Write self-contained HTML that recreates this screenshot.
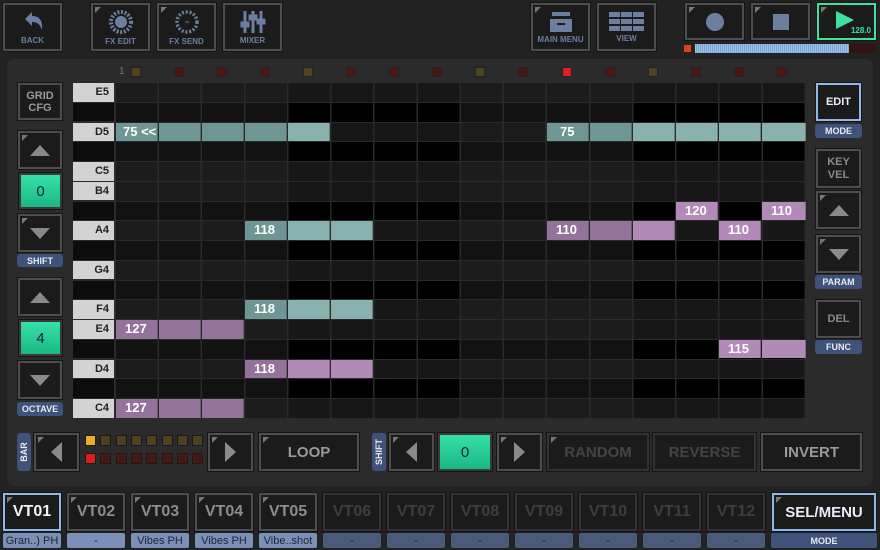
<!DOCTYPE html>
<html><head><meta charset="utf-8"><style>
*{margin:0;padding:0;box-sizing:border-box}
body{width:880px;height:550px;background:#222222;position:relative;overflow:hidden;font-family:"Liberation Sans",sans-serif;font-weight:bold}
.a{position:absolute}
.btn{position:absolute;background:#1b1b1b;border:2px solid #4e4e4e;box-shadow:0 0 0 1px #151515;display:flex;align-items:center;justify-content:center;color:#9a9a9a}
.btn.c::before{content:"";position:absolute;left:2px;top:2px;border-top:6px solid #777;border-right:6px solid transparent}
.tb{flex-direction:column;color:#6c7fa0;font-size:8px}
.tb span{margin-top:2px}
.lbl{position:absolute;background:#3f527a;color:#e6ecf6;font-size:9px;display:flex;align-items:center;justify-content:center;border-radius:3px}
.grn{position:absolute;background:linear-gradient(#35e0a8,#1bb884);border:2px solid #3a3a3a;box-shadow:0 0 0 1px #151515;display:flex;align-items:center;justify-content:center;color:#123;font-size:15px;font-weight:normal}
.key{position:absolute;left:73px;width:41px;height:18.5px;font-size:11px;color:#222;text-align:right;padding-right:5px;line-height:18.5px}
.wk{background:#d3d3d3}
.bk{background:#0c0c0c}
.row{position:absolute;left:116px;width:690px;height:19.75px;border-bottom:1px solid #2a2a2a}
.rw{background:repeating-linear-gradient(to right,transparent 0 41.6px,#2a2a2a 41.6px 43.125px),linear-gradient(to right,#1c1c1c 0 25%,#171717 25% 50%,#1c1c1c 50% 75%,#171717 75%)}
.rb{background:repeating-linear-gradient(to right,transparent 0 41.6px,#2a2a2a 41.6px 43.125px),linear-gradient(to right,#121212 0 25%,#000 25% 50%,#121212 50% 75%,#000 75%)}
.n{position:absolute;height:18.5px;width:42px;color:#fff;font-size:13px;line-height:18.5px;padding-left:7px;border-right:1px solid rgba(0,0,0,.25)}
.t1{background:#6e9694}.t2{background:#89b2af}.p1{background:#94739b}.p2{background:#b28ab8}
.mk{position:absolute;top:67px;width:10px;height:10px;border:1px solid #222;background:#4a1616}
.mk.o{background:#4d4522}.mk.r{background:#e02020}
.vt{position:absolute;top:493px;width:58px;height:38px;font-size:16px;color:#8c8c8c}
.vt.d{color:#3e3e3e;border-color:#333}
.vl{position:absolute;top:533px;width:58px;height:15px;background:#7b8fb8;color:#1d2535;font-size:11px;font-weight:normal;display:flex;align-items:center;justify-content:center;border-radius:2px}
.vl.d{background:#4a5a7a}
.led{position:absolute;width:11px;height:11px;border:1px solid #1a1a1a}
.up{border-bottom:11px solid #8a8a8a;border-left:10px solid transparent;border-right:10px solid transparent}
.dn{border-top:11px solid #8a8a8a;border-left:10px solid transparent;border-right:10px solid transparent}
.lf{border-right:11px solid #8a8a8a;border-top:10px solid transparent;border-bottom:10px solid transparent}
.rt{border-left:11px solid #8a8a8a;border-top:10px solid transparent;border-bottom:10px solid transparent}
</style></head><body>
<div class="a" style="left:7px;top:59px;width:866px;height:427px;background:#2b2b2b;border-radius:8px"></div>

<div class="btn tb" style="left:3px;top:3px;width:59px;height:48px"><svg width="24" height="24" viewBox="0 0 24 24"><path d="M4 9 L11 2 L11 6 C18 6 22 10 21 20 C19 14 16 12 11 12 L11 16 Z" fill="#6c7fa0"/></svg><span>BACK</span></div>
<div class="btn tb c" style="left:91px;top:3px;width:59px;height:48px"><svg width="26" height="26" viewBox="0 0 26 26"><circle cx="13" cy="13" r="6" fill="#6c7fa0"/><circle cx="13" cy="13" r="10" fill="none" stroke="#6c7fa0" stroke-width="4" stroke-dasharray="2 1.6"/></svg><span>FX EDIT</span></div>
<div class="btn tb c" style="left:157px;top:3px;width:59px;height:48px"><svg width="26" height="26" viewBox="0 0 26 26"><circle cx="13" cy="13" r="10" fill="none" stroke="#6c7fa0" stroke-width="3.5" stroke-dasharray="2 1.8"/><path d="M11 13h4" stroke="#6c7fa0"/></svg><span>FX SEND</span></div>
<div class="btn tb" style="left:223px;top:3px;width:59px;height:48px"><svg width="26" height="24" viewBox="0 0 26 24"><g stroke="#6c7fa0" stroke-width="3" fill="#6c7fa0"><path d="M5 1v22M13 1v22M21 1v22"/><rect x="2" y="13" width="6" height="3"/><rect x="10" y="6" width="6" height="3"/><rect x="18" y="10" width="6" height="3"/></g></svg><span>MIXER</span></div>
<div class="btn tb c" style="left:531px;top:3px;width:59px;height:48px"><svg width="24" height="22" viewBox="0 0 24 22"><rect x="3" y="1" width="18" height="4" fill="#6c7fa0"/><path d="M1 8h22v13H1z" fill="#6c7fa0"/><rect x="8" y="12" width="8" height="2" fill="#1b1b1b"/></svg><span>MAIN MENU</span></div>
<div class="btn tb" style="left:597px;top:3px;width:59px;height:48px"><svg width="36" height="20" viewBox="0 0 36 20"><g fill="#6c7fa0"><rect x="0" y="0" width="11" height="5"/><rect x="12" y="0" width="11" height="5"/><rect x="24" y="0" width="11" height="5"/><rect x="0" y="7" width="11" height="5"/><rect x="12" y="7" width="11" height="5"/><rect x="24" y="7" width="11" height="5"/><rect x="0" y="14" width="11" height="5"/><rect x="12" y="14" width="11" height="5"/><rect x="24" y="14" width="11" height="5"/></g></svg><span>VIEW</span></div>
<div class="btn c" style="left:685px;top:3px;width:59px;height:37px"><div style="width:18px;height:18px;border-radius:50%;background:#6c7fa0"></div></div>
<div class="btn c" style="left:751px;top:3px;width:59px;height:37px"><div style="width:16px;height:16px;background:#6c7fa0"></div></div>
<div class="btn c" style="left:817px;top:3px;width:59px;height:37px;border-color:#3fe0a0"><svg width="20" height="18" viewBox="0 0 20 18" style="margin-left:-4px;margin-top:-4px"><path d="M1 0L19 9L1 18Z" fill="#3fe0a0"/></svg><span class="a" style="right:3px;bottom:3px;font-size:8px;color:#3fe0a0">128.0</span></div>
<div class="a" style="left:684px;top:45px;width:7px;height:7px;background:#e0401a"></div>
<div class="a" style="left:695px;top:44px;width:154px;height:9px;background:repeating-linear-gradient(to right,#9cc6ee 0 1.3px,#5a7fa8 1.3px 2px)"></div>
<div class="a" style="left:849px;top:44px;width:27px;height:9px;background:repeating-linear-gradient(to right,#3a1414 0 1.3px,#241010 1.3px 2px)"></div>

<div class="a" style="left:119px;top:66px;font-size:10px;color:#777;font-weight:normal">1</div>
<div class="mk o" style="left:131px"></div><div class="mk" style="left:174px"></div><div class="mk" style="left:217px"></div><div class="mk" style="left:260px"></div>
<div class="mk o" style="left:303px"></div><div class="mk" style="left:346px"></div><div class="mk" style="left:389px"></div><div class="mk" style="left:432px"></div>
<div class="mk o" style="left:475px"></div><div class="mk" style="left:518px"></div><div class="mk r" style="left:562px"></div><div class="mk" style="left:605px"></div>
<div class="mk o" style="left:648px"></div><div class="mk" style="left:691px"></div><div class="mk" style="left:734px"></div><div class="mk" style="left:777px"></div>

<div class="row rw" style="top:83px"></div>
<div class="row rb" style="top:102.75px"></div>
<div class="row rw" style="top:122.5px"></div>
<div class="row rb" style="top:142.25px"></div>
<div class="row rw" style="top:162px"></div>
<div class="row rw" style="top:181.75px"></div>
<div class="row rb" style="top:201.5px"></div>
<div class="row rw" style="top:221.25px"></div>
<div class="row rb" style="top:241px"></div>
<div class="row rw" style="top:260.75px"></div>
<div class="row rb" style="top:280.5px"></div>
<div class="row rw" style="top:300.25px"></div>
<div class="row rw" style="top:320px"></div>
<div class="row rb" style="top:339.75px"></div>
<div class="row rw" style="top:359.5px"></div>
<div class="row rb" style="top:379.25px"></div>
<div class="row rw" style="top:399px"></div>

<div class="key wk" style="top:83px">E5</div>
<div class="key bk" style="top:102.75px"></div>
<div class="key wk" style="top:122.5px">D5</div>
<div class="key bk" style="top:142.25px"></div>
<div class="key wk" style="top:162px">C5</div>
<div class="key wk" style="top:181.75px">B4</div>
<div class="key bk" style="top:201.5px"></div>
<div class="key wk" style="top:221.25px">A4</div>
<div class="key bk" style="top:241px"></div>
<div class="key wk" style="top:260.75px">G4</div>
<div class="key bk" style="top:280.5px"></div>
<div class="key wk" style="top:300.25px">F4</div>
<div class="key wk" style="top:320px">E4</div>
<div class="key bk" style="top:339.75px"></div>
<div class="key wk" style="top:359.5px">D4</div>
<div class="key bk" style="top:379.25px"></div>
<div class="key wk" style="top:399px">C4</div>

<div class="n t1" style="left:116px;top:122.5px">75 &lt;&lt;</div>
<div class="n t1" style="left:159px;top:122.5px"></div><div class="n t1" style="left:202px;top:122.5px"></div><div class="n t1" style="left:245px;top:122.5px"></div><div class="n t2" style="left:288px;top:122.5px"></div>
<div class="n t1" style="left:547px;top:122.5px;padding-left:13px">75</div><div class="n t1" style="left:590px;top:122.5px"></div>
<div class="n t2" style="left:633px;top:122.5px"></div><div class="n t2" style="left:676px;top:122.5px"></div><div class="n t2" style="left:719px;top:122.5px"></div><div class="n t2" style="left:762px;top:122.5px;width:44px"></div>
<div class="n p2" style="left:676px;top:201.5px;padding-left:9px">120</div>
<div class="n p2" style="left:762px;top:201.5px;padding-left:9px;width:44px">110</div>
<div class="n t1" style="left:245px;top:221.25px;padding-left:9px">118</div><div class="n t2" style="left:288px;top:221.25px"></div><div class="n t2" style="left:331px;top:221.25px"></div>
<div class="n p1" style="left:547px;top:221.25px;padding-left:9px">110</div><div class="n p1" style="left:590px;top:221.25px"></div><div class="n p2" style="left:633px;top:221.25px"></div>
<div class="n p2" style="left:719px;top:221.25px;padding-left:9px">110</div>
<div class="n t1" style="left:245px;top:300.25px;padding-left:9px">118</div><div class="n t2" style="left:288px;top:300.25px"></div><div class="n t2" style="left:331px;top:300.25px"></div>
<div class="n p1" style="left:116px;top:320px;padding-left:9px">127</div><div class="n p1" style="left:159px;top:320px"></div><div class="n p1" style="left:202px;top:320px"></div>
<div class="n p2" style="left:719px;top:339.75px;padding-left:9px">115</div><div class="n p2" style="left:762px;top:339.75px;width:44px"></div>
<div class="n p1" style="left:245px;top:359.5px;padding-left:9px">118</div><div class="n p2" style="left:288px;top:359.5px"></div><div class="n p2" style="left:331px;top:359.5px"></div>
<div class="n p1" style="left:116px;top:399px;padding-left:9px">127</div><div class="n p1" style="left:159px;top:399px"></div><div class="n p1" style="left:202px;top:399px"></div>

<div class="btn" style="left:18px;top:83px;width:44px;height:37px;font-size:11px;text-align:center;line-height:12px">GRID<br>CFG</div>
<div class="btn c" style="left:18px;top:131px;width:44px;height:38px"><div class="up"></div></div>
<div class="grn" style="left:19px;top:173px;width:43px;height:36px">0</div>
<div class="btn c" style="left:18px;top:214px;width:44px;height:38px"><div class="dn"></div></div>
<div class="lbl" style="left:17px;top:254px;width:46px;height:13px">SHIFT</div>
<div class="btn" style="left:18px;top:278px;width:44px;height:38px"><div class="up"></div></div>
<div class="grn" style="left:19px;top:320px;width:43px;height:36px">4</div>
<div class="btn" style="left:18px;top:361px;width:44px;height:38px"><div class="dn"></div></div>
<div class="lbl" style="left:17px;top:402px;width:46px;height:14px">OCTAVE</div>

<div class="btn" style="left:816px;top:83px;width:45px;height:38px;border-color:#8fb8e8;color:#e8eef8;font-size:11px">EDIT</div>
<div class="lbl" style="left:815px;top:124px;width:47px;height:14px">MODE</div>
<div class="btn" style="left:816px;top:149px;width:45px;height:39px;font-size:11px;text-align:center;line-height:13px;color:#8a8a8a">KEY<br>VEL</div>
<div class="btn c" style="left:816px;top:191px;width:45px;height:38px"><div class="up"></div></div>
<div class="btn c" style="left:816px;top:235px;width:45px;height:38px"><div class="dn"></div></div>
<div class="lbl" style="left:815px;top:275px;width:47px;height:14px">PARAM</div>
<div class="btn" style="left:816px;top:300px;width:45px;height:38px;font-size:11px;color:#8a8a8a">DEL</div>
<div class="lbl" style="left:815px;top:340px;width:47px;height:14px">FUNC</div>

<div class="lbl" style="left:17px;top:433px;width:14px;height:38px"><span style="transform:rotate(-90deg);font-size:9px">BAR</span></div>
<div class="btn c" style="left:34px;top:433px;width:45px;height:38px"><div class="lf"></div></div>
<div class="led" style="left:85px;top:435px;background:#e8b020"></div><div class="led" style="left:100px;top:435px;background:#4a4222"></div><div class="led" style="left:116px;top:435px;background:#4a4222"></div><div class="led" style="left:131px;top:435px;background:#4a4222"></div><div class="led" style="left:146px;top:435px;background:#4a4222"></div><div class="led" style="left:162px;top:435px;background:#4a4222"></div><div class="led" style="left:177px;top:435px;background:#4a4222"></div><div class="led" style="left:192px;top:435px;background:#4a4222"></div>
<div class="led" style="left:85px;top:453px;background:#d82020"></div><div class="led" style="left:100px;top:453px;background:#4a1616"></div><div class="led" style="left:116px;top:453px;background:#4a1616"></div><div class="led" style="left:131px;top:453px;background:#4a1616"></div><div class="led" style="left:146px;top:453px;background:#4a1616"></div><div class="led" style="left:162px;top:453px;background:#4a1616"></div><div class="led" style="left:177px;top:453px;background:#4a1616"></div><div class="led" style="left:192px;top:453px;background:#4a1616"></div>
<div class="btn c" style="left:208px;top:433px;width:45px;height:38px"><div class="rt"></div></div>
<div class="btn c" style="left:259px;top:433px;width:100px;height:38px;font-size:15px">LOOP</div>
<div class="lbl" style="left:372px;top:433px;width:14px;height:38px"><span style="transform:rotate(-90deg);font-size:9px">SHIFT</span></div>
<div class="btn c" style="left:389px;top:433px;width:45px;height:38px"><div class="lf"></div></div>
<div class="grn" style="left:438px;top:433px;width:54px;height:38px">0</div>
<div class="btn c" style="left:497px;top:433px;width:45px;height:38px"><div class="rt"></div></div>
<div class="btn c" style="left:547px;top:433px;width:102px;height:38px;font-size:15px;color:#444;border-color:#333">RANDOM</div>
<div class="btn" style="left:653px;top:433px;width:103px;height:38px;font-size:15px;color:#444;border-color:#333">REVERSE</div>
<div class="btn" style="left:761px;top:433px;width:101px;height:38px;font-size:15px">INVERT</div>

<div class="btn vt c" style="left:3px;border-color:#8fb8e8;color:#f0f4fa">VT01</div>
<div class="btn vt c" style="left:67px">VT02</div>
<div class="btn vt c" style="left:131px">VT03</div>
<div class="btn vt c" style="left:195px">VT04</div>
<div class="btn vt c" style="left:259px">VT05</div>
<div class="btn vt d" style="left:323px">VT06</div>
<div class="btn vt d" style="left:387px">VT07</div>
<div class="btn vt d" style="left:451px">VT08</div>
<div class="btn vt d" style="left:515px">VT09</div>
<div class="btn vt d" style="left:579px">VT10</div>
<div class="btn vt d" style="left:643px">VT11</div>
<div class="btn vt d" style="left:707px">VT12</div>
<div class="btn c" style="left:772px;top:493px;width:104px;height:38px;border-color:#8fb8e8;color:#e8eef8;font-size:15px">SEL/MENU</div>
<div class="vl" style="left:3px">Gran..) PH</div>
<div class="vl" style="left:67px">-</div>
<div class="vl" style="left:131px">Vibes PH</div>
<div class="vl" style="left:195px">Vibes PH</div>
<div class="vl" style="left:259px">Vibe..shot</div>
<div class="vl d" style="left:323px">-</div>
<div class="vl d" style="left:387px">-</div>
<div class="vl d" style="left:451px">-</div>
<div class="vl d" style="left:515px">-</div>
<div class="vl d" style="left:579px">-</div>
<div class="vl d" style="left:643px">-</div>
<div class="vl d" style="left:707px">-</div>
<div class="lbl" style="left:771px;top:533px;width:106px;height:15px;font-size:9px;border-radius:2px">MODE</div>
</body></html>
